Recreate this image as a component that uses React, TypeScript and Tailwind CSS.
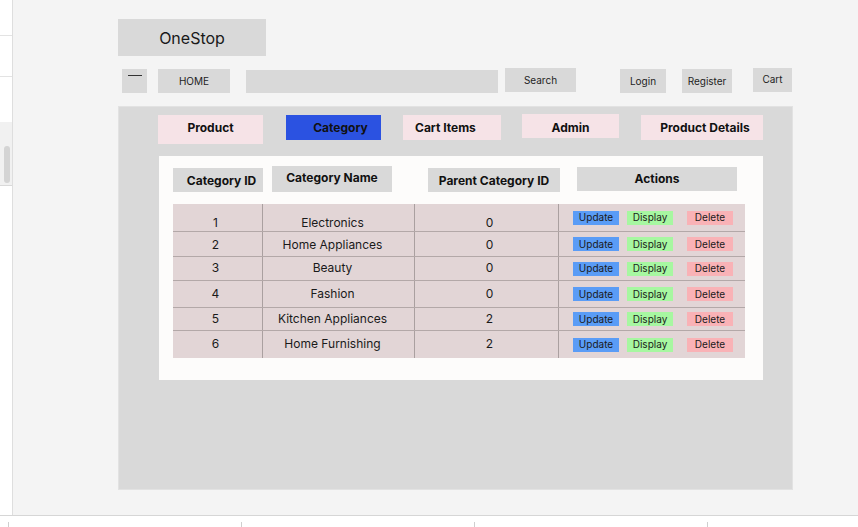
import React from "react"

type Row = { id: number; name: string; parent: number; h: string; pad: string }

const rows: Row[] = [
  { id: 1, name: "Electronics", parent: 0, h: "h-[28px]", pad: "pt-[10px]" },
  { id: 2, name: "Home Appliances", parent: 0, h: "h-[25px]", pad: "pt-[1px]" },
  { id: 3, name: "Beauty", parent: 0, h: "h-[24px]", pad: "pb-[1px]" },
  { id: 4, name: "Fashion", parent: 0, h: "h-[27px]", pad: "pt-0" },
  { id: 5, name: "Kitchen Appliances", parent: 2, h: "h-[23px]", pad: "pt-0" },
  { id: 6, name: "Home Furnishing", parent: 2, h: "h-[27px]", pad: "pb-[1px]" },
]

function NavBox({ w, mt, ml, children }: { w: string; mt: string; ml: string; children?: React.ReactNode }) {
  return (
    <div className={`${w} ${mt} ${ml} h-[24px] bg-[#d9d9d9] flex items-center justify-center text-[10px] text-[#1e1e1e]`}>
      {children}
    </div>
  )
}

export default function App() {
  return (
    <div
      className="w-[858px] h-[527px] bg-white flex flex-col overflow-hidden"
      style={{ fontFamily: "Inter, 'Noto Sans', sans-serif" }}
    >
      <div className="h-[516px] flex border-b border-[#d6d6d6]">
        {/* left strip */}
        <div className="w-[13px] border-r border-[#dedede] flex flex-col">
          <div className="h-[36px] border-b border-[#e3e3e3]" />
          <div className="h-[41px] border-b border-[#e3e3e3]" />
          <div className="h-[45px]" />
          <div className="h-[64px] bg-[#f1f1f1] border-b border-[#d9d9d9] pt-[24px] pl-[4px]">
            <div className="w-[6px] h-[37px] rounded-full bg-[#d4d4d4]" />
          </div>
        </div>

        {/* canvas */}
        <div className="flex-1 bg-[#f4f4f4] pl-[105px] pt-[19px]">
          <div className="w-[148px] h-[37px] bg-[#d9d9d9] flex items-center justify-center text-[16px] text-[#1a1a1a]">
            OneStop
          </div>

          <div className="flex items-start mt-[12px]">
            <div className="w-[25px] h-[24px] mt-[1px] ml-[4px] bg-[#d9d9d9] pt-[6px] pl-[6px]">
              <div className="w-[14px] h-px bg-[#333]" />
            </div>
            <NavBox w="w-[72px]" mt="mt-[1px]" ml="ml-[11px]">HOME</NavBox>
            <div className="w-[252px] h-[23px] mt-[2px] ml-[16px] bg-[#d9d9d9]" />
            <NavBox w="w-[71px]" mt="mt-0" ml="ml-[7px]">Search</NavBox>
            <NavBox w="w-[46px]" mt="mt-[1px]" ml="ml-[44px]">Login</NavBox>
            <NavBox w="w-[50px]" mt="mt-[1px]" ml="ml-[16px]">Register</NavBox>
            <div className="w-[39px] h-[24px] ml-[21px] bg-[#d9d9d9] flex justify-center pt-[4px] text-[10px] text-[#1e1e1e]">
              Cart
            </div>
          </div>

          {/* frame */}
          <div className="w-[675px] h-[384px] mt-[13px] bg-[#d9d9d9] border border-[#e2e2e2] pt-[7px] pl-[39px]">
            <div className="flex items-start text-[12px] font-bold text-[#111]">
              <div className="w-[105px] h-[29px] mt-[1px] bg-[#f6e3e7] flex items-center justify-center pb-[3px]">Product</div>
              <div className="w-[95px] h-[25px] mt-[1px] ml-[23px] bg-[#2b52e1] flex items-center justify-center pl-[14px]">Category</div>
              <div className="w-[98px] h-[25px] mt-[1px] ml-[22px] bg-[#f6e3e7] flex items-center pl-[12px]">Cart Items</div>
              <div className="w-[97px] h-[24px] ml-[21px] bg-[#f6e3e7] flex items-center justify-center pt-[3px]">Admin</div>
              <div className="w-[122px] h-[25px] mt-[1px] ml-[22px] bg-[#f6e3e7] flex items-center justify-center pl-[6px]">Product Details</div>
            </div>

            {/* white panel */}
            <div className="w-[604px] h-[224px] mt-[12px] ml-[1px] bg-[#fdfcfb] pt-[10px] pl-[14px]">
              <div className="flex items-start text-[12px] font-bold text-[#111]">
                <div className="w-[90px] h-[24px] mt-[2px] bg-[#d9d9d9] flex items-center justify-center pl-[7px] pt-[2px]">Category ID</div>
                <div className="w-[120px] h-[26px] ml-[9px] bg-[#d9d9d9] flex items-center justify-center pb-[2px]">Category Name</div>
                <div className="w-[132px] h-[24px] mt-[2px] ml-[36px] bg-[#d9d9d9] flex items-center justify-center pt-[2px]">Parent Category ID</div>
                <div className="w-[160px] h-[24px] mt-[1px] ml-[17px] bg-[#d9d9d9] flex items-center justify-center">Actions</div>
              </div>

              <div className="w-[572px] mt-[12px] bg-[#e2d5d6] text-[12px] text-[#1a1a1a]">
                {rows.map((r, i) => (
                  <div
                    key={r.id}
                    className={`flex ${r.h} ${i < rows.length - 1 ? "border-b border-[#b3a8a8]" : ""}`}
                  >
                    <div className={`w-[90px] border-r border-[#aaa0a0] flex items-center justify-center pr-[4px] ${r.pad}`}>{r.id}</div>
                    <div className={`w-[152px] border-r border-[#aaa0a0] flex items-center justify-center pr-[12px] ${r.pad}`}>{r.name}</div>
                    <div className={`w-[144px] border-r border-[#aaa0a0] flex items-center justify-center pl-[6px] ${r.pad}`}>{r.parent}</div>
                    <div className="flex-1 flex items-center pl-[14px] text-[10px]">
                      <div className="w-[46px] h-[14px] bg-[#5a9cf6] flex items-center justify-center">Update</div>
                      <div className="w-[46px] h-[14px] ml-[8px] bg-[#a7f7a1] flex items-center justify-center">Display</div>
                      <div className="w-[46px] h-[14px] ml-[14px] bg-[#f9b2b6] flex items-center justify-center">Delete</div>
                    </div>
                  </div>
                ))}
              </div>
            </div>
          </div>
        </div>
      </div>

      {/* ruler */}
      <div className="flex-1 flex items-end">
        <div className="w-px h-[5px] ml-[8px] bg-[#cfcfcf]" />
        <div className="w-px h-[5px] ml-[232px] bg-[#cfcfcf]" />
        <div className="w-px h-[5px] ml-[232px] bg-[#cfcfcf]" />
        <div className="w-px h-[5px] ml-[232px] bg-[#cfcfcf]" />
      </div>
    </div>
  )
}
